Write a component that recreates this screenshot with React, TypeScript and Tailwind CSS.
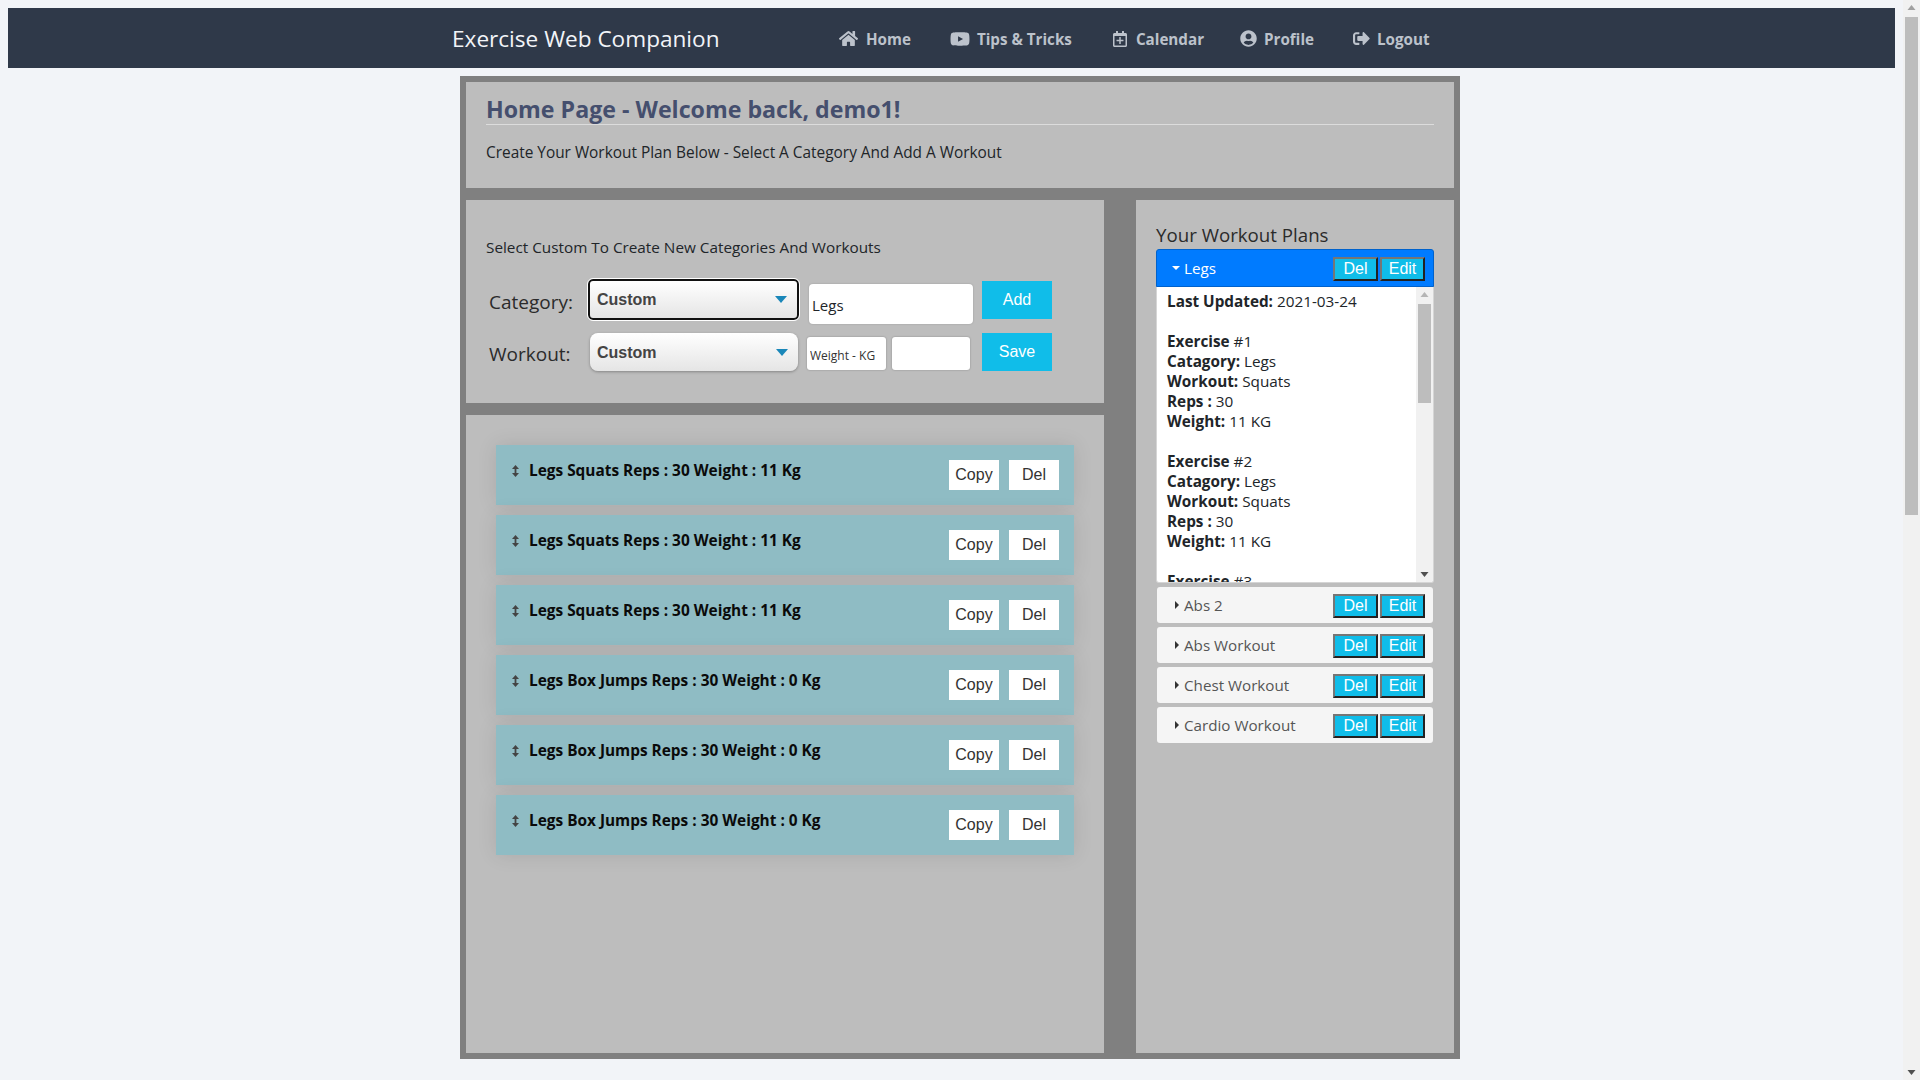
import { FaHome, FaYoutube, FaRegCalendarPlus, FaUserCircle, FaSignOutAlt } from "react-icons/fa";

const SEGOE = "font-['Open_Sans',sans-serif]";
const ARIAL = "font-['Liberation_Sans',Arial,sans-serif]";

function NavLink({ icon, label, gap, left }: { icon: React.ReactNode; label: string; gap: string; left: string }) {
  return (
    <a className={`flex items-center font-bold text-[15.2px] text-[#bcc2cb] ${left}`}>
      <span className={`flex items-center ${gap}`}>{icon}</span>
      {label}
    </a>
  );
}

function Navbar() {
  return (
    <nav className="mx-2 mt-2 h-[60px] w-[1887px] shrink-0 bg-[#2f3949] flex items-center pl-[444px] pt-[2px]">
      <span className="text-[22.6px] text-[#f2f4f8] w-[387px] whitespace-nowrap">Exercise Web Companion</span>
      <NavLink left="" gap="mr-[8px]" icon={<FaHome size={19} />} label="Home" />
      <NavLink left="ml-[39px]" gap="mr-[7px]" icon={<FaYoutube size={20} />} label="Tips & Tricks" />
      <NavLink left="ml-[40px]" gap="mr-[8px]" icon={<FaRegCalendarPlus size={16} />} label="Calendar" />
      <NavLink left="ml-[36px]" gap="mr-[7px]" icon={<FaUserCircle size={17} />} label="Profile" />
      <NavLink left="ml-[39px]" gap="mr-[7px]" icon={<FaSignOutAlt size={17} />} label="Logout" />
    </nav>
  );
}

function SelectBox({ focused }: { focused?: boolean }) {
  return (
    <div
      className={`flex items-center justify-between bg-gradient-to-b from-white to-[#e5e5e5] pl-[7px] pr-[10px] ${
        focused
          ? "w-[211px] h-[41px] rounded-[5px] border-2 border-[#111] outline outline-1 outline-white"
          : "w-[208px] h-[38px] ml-[2px] rounded-[8px] shadow-[0_1px_3px_rgba(0,0,0,0.3)]"
      }`}
    >
      <span className={`${ARIAL} font-bold text-[16px] text-[#444] mt-px`}>Custom</span>
      <svg width="12" height="7" viewBox="0 0 12 7">
        <path d="M0 0H12L6 7Z" fill="#1a87b9" />
      </svg>
    </div>
  );
}

function CyanBtn({ label, h }: { label: string; h: string }) {
  return (
    <button className={`${ARIAL} w-[70px] ${h} bg-[#10bde9] text-white text-[16px]`}>{label}</button>
  );
}

function FormPanel() {
  return (
    <section className="h-[203px] bg-[#bdbdbd] pl-[20px] pt-[37px]">
      <p className="text-[15.3px] leading-[20px] text-[#212529]">Select Custom To Create New Categories And Workouts</p>
      <div className="flex mt-[22px] h-[41px]">
        <span className="w-[102px] pl-[3px] pt-[3px] text-[19px] leading-[40px] text-[#2b2b2b]">Category:</span>
        <SelectBox focused />
        <input
          readOnly
          value="Legs"
          className="ml-[10px] mt-[5px] w-[164px] h-[40px] rounded-[4px] bg-white pl-[3px] pt-[1px] text-[15px] text-[#212529] shadow-[0_0_2px_rgba(0,0,0,0.2)]"
        />
        <div className="ml-[9px] mt-[2px]">
          <CyanBtn label="Add" h="h-[38px]" />
        </div>
      </div>
      <div className="flex mt-[13px] h-[38px]">
        <span className="w-[102px] pl-[3px] pt-[1px] text-[19px] leading-[40px] text-[#2b2b2b]">Workout:</span>
        <SelectBox />
        <input
          readOnly
          value="Weight - KG"
          className="ml-[9px] mt-[4px] w-[79px] h-[33px] rounded-[3px] bg-white pl-[3px] pt-[3px] text-[12px] text-[#333] shadow-[0_0_2px_rgba(0,0,0,0.3)]"
        />
        <input
          readOnly
          className="ml-[6px] mt-[4px] w-[78px] h-[33px] rounded-[3px] bg-white shadow-[0_0_2px_rgba(0,0,0,0.3)]"
        />
        <div className="ml-[12px]">
          <CyanBtn label="Save" h="h-[38px]" />
        </div>
      </div>
    </section>
  );
}

function ListItem({ text }: { text: string }) {
  return (
    <div className="mb-[10px] h-[60px] bg-[#8fbcc4] shadow-[0_0_20px_rgba(0,0,0,0.1)] flex justify-between pl-[16px] pr-[15px]">
      <div className="flex items-start pt-[15px]">
        <svg width="7" height="12" viewBox="0 0 7 12" className="mt-[5px] mr-[10px]">
          <path d="M3.5 0L7 4H4.4V8H7L3.5 12L0 8H2.6V4H0Z" fill="#444" />
        </svg>
        <span className="font-bold text-[15.4px] leading-[22px] text-[#0a0a0a] whitespace-nowrap">{text}</span>
      </div>
      <div className={`${ARIAL} flex gap-[10px] pt-[15px] text-[16px] text-[#333]`}>
        <button className="w-[50px] h-[30px] bg-white">Copy</button>
        <button className="w-[50px] h-[30px] bg-white">Del</button>
      </div>
    </div>
  );
}

function MiniBtn({ label }: { label: string }) {
  return (
    <button
      className={`${ARIAL} w-[45px] h-[24px] bg-[#10bde9] text-white text-[16px] leading-[20px] border-2 border-t-[#767676] border-l-[#767676] border-r-[#222] border-b-[#222]`}
    >
      {label}
    </button>
  );
}

function Scrollbar({ wide }: { wide?: boolean }) {
  return (
    <div className={`flex flex-col items-center justify-between bg-[#f1f1f1] ${wide ? "w-[17px] h-[1080px]" : "w-[17px] h-full"}`}>
      <div className="flex flex-col items-center w-full">
        <svg width="9" height="17" viewBox="0 0 9 17" className="shrink-0">
          <path d="M4.5 5L8.5 10H0.5Z" fill={wide ? "#a0a0a0" : "#b5b5b5"} />
        </svg>
        <div className={`w-[13px] bg-[#bdbdbd] ${wide ? "h-[498px]" : "h-[99px]"}`} />
      </div>
      <svg width="9" height="17" viewBox="0 0 9 17">
        <path d="M0.5 7H8.5L4.5 12Z" fill="#505050" />
      </svg>
    </div>
  );
}

function Exercise({ n, workout = "Squats" }: { n: number; workout?: string }) {
  return (
    <div className="mb-[20px]">
      <div><b>Exercise</b> #{n}</div>
      <div><b>Catagory:</b> Legs</div>
      <div><b>Workout:</b> {workout}</div>
      <div><b>Reps :</b> 30</div>
      <div><b>Weight:</b> 11 KG</div>
    </div>
  );
}

function PlanRow({ name }: { name: string }) {
  return (
    <div className="mx-px mt-[4px] h-[36px] rounded-[3px] bg-[#f5f5f5] flex items-center justify-between pl-[18px] pr-[8px]">
      <div className="flex items-center">
        <svg width="4" height="8" viewBox="0 0 4 8" className="mr-[5px]">
          <path d="M0 0L4 4L0 8Z" fill="#333" />
        </svg>
        <span className="text-[15.2px] text-[#555]">{name}</span>
      </div>
      <div className="flex gap-[2px] mt-[2px]">
        <MiniBtn label="Del" />
        <MiniBtn label="Edit" />
      </div>
    </div>
  );
}

function PlansPanel() {
  return (
    <aside className="w-[318px] bg-[#bdbdbd] pl-[20px] pr-[20px] pt-[21px]">
      <h3 className="text-[18.7px] leading-[27px] mb-px text-[#2b2b2b]">Your Workout Plans</h3>
      <div className="h-[38px] bg-[#007bff] rounded-t-[3px] border border-[#0062cc] flex items-center justify-between pl-[15px] pr-[8px]">
        <div className="flex items-center text-white">
          <svg width="8" height="4" viewBox="0 0 8 4" className="mr-[4px]">
            <path d="M0 0H8L4 4Z" fill="#fff" />
          </svg>
          <span className="text-[15.2px]">Legs</span>
        </div>
        <div className="flex gap-[2px] mt-[2px]">
          <MiniBtn label="Del" />
          <MiniBtn label="Edit" />
        </div>
      </div>
      <div className="h-[296px] bg-white border-x border-b border-[#d5d5d5] flex rounded-b-[3px] overflow-hidden">
        <div className="flex-1 overflow-hidden pl-[10px] pt-[4px] text-[15.3px] leading-[20px] text-[#212529]">
          <div className="mb-[20px]"><b>Last Updated:</b> 2021-03-24</div>
          <Exercise n={1} />
          <Exercise n={2} />
          <Exercise n={3} />
        </div>
        <Scrollbar />
      </div>
      <PlanRow name="Abs 2" />
      <PlanRow name="Abs Workout" />
      <PlanRow name="Chest Workout" />
      <PlanRow name="Cardio Workout" />
    </aside>
  );
}

const rows = [
  "Legs Squats Reps : 30 Weight : 11 Kg",
  "Legs Squats Reps : 30 Weight : 11 Kg",
  "Legs Squats Reps : 30 Weight : 11 Kg",
  "Legs Box Jumps Reps : 30 Weight : 0 Kg",
  "Legs Box Jumps Reps : 30 Weight : 0 Kg",
  "Legs Box Jumps Reps : 30 Weight : 0 Kg",
];

export default function App() {
  return (
    <div className={`${SEGOE} flex w-[1920px] h-[1080px] overflow-hidden bg-[#f2f4f8]`}>
      <div className="w-[1903px] flex flex-col">
        <Navbar />
        <main className="ml-[460px] mt-[8px] w-[1000px] h-[983px] bg-[#808080] p-[6px]">
          <header className="h-[106px] bg-[#bdbdbd] px-[20px] pt-[13px]">
            <h1 className="h-[30px] border-b border-[#dcdcdc] text-[23.2px] font-bold leading-[28px] text-[#454f6e]">
              Home Page - Welcome back, demo1!
            </h1>
            <p className="mt-[18px] text-[15.4px] leading-[20px] text-[#212529]">
              Create Your Workout Plan Below - Select A Category And Add A Workout
            </p>
          </header>
          <div className="flex justify-between mt-[12px] h-[853px]">
            <div className="w-[638px] flex flex-col gap-[12px]">
              <FormPanel />
              <section className="flex-1 bg-[#bdbdbd] px-[30px] pt-[30px]">
                {rows.map((r, i) => (
                  <ListItem key={i} text={r} />
                ))}
              </section>
            </div>
            <PlansPanel />
          </div>
        </main>
      </div>
      <Scrollbar wide />
    </div>
  );
}
